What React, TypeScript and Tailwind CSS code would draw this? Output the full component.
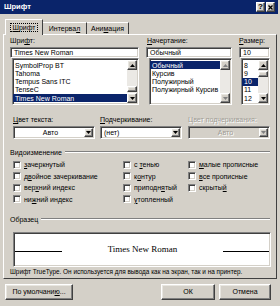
import React from 'react';

const raised =
  'border border-t-white border-l-white border-r-[#404040] border-b-[#404040] shadow-[inset_-1px_-1px_#808080,inset_1px_1px_#e8e6e0]';
const sunken =
  'border border-t-[#808080] border-l-[#808080] border-r-white border-b-white shadow-[inset_1px_1px_#404040,inset_-1px_-1px_#d4d0c8]';

function Arrow({ up, disabled }: { up?: boolean; disabled?: boolean }) {
  return (
    <svg width="5" height="3" viewBox="0 0 5 3">
      <polygon points={up ? '2.5,0 5,3 0,3' : '0,0 5,0 2.5,3'} fill={disabled ? '#808080' : '#000'} />
    </svg>
  );
}

function ScrollBtn({ up, disabled }: { up?: boolean; disabled?: boolean }) {
  return (
    <div className={`flex h-[10px] w-[10px] shrink-0 items-center justify-center bg-[#d4d0c8] ${raised}`}>
      <Arrow up={up} disabled={disabled} />
    </div>
  );
}

function Scrollbar({ thumbTop, disabled }: { thumbTop?: number; disabled?: boolean }) {
  return (
    <div className="flex h-full w-[10px] shrink-0 flex-col bg-[#ebe9e5]">
      <ScrollBtn up disabled={disabled} />
      <div className="relative flex-1">
        {thumbTop !== undefined && (
          <div className={`absolute left-0 h-[6px] w-[10px] bg-[#d4d0c8] ${raised}`} style={{ top: thumbTop }} />
        )}
      </div>
      <ScrollBtn disabled={disabled} />
    </div>
  );
}

function ListBox({
  items,
  selected,
  thumbTop,
  disabled,
  className,
}: {
  items: string[];
  selected: number;
  thumbTop?: number;
  disabled?: boolean;
  className: string;
}) {
  return (
    <div className={`flex h-[47px] bg-white ${sunken} ${className}`}>
      <div className="flex min-w-0 flex-1 flex-col pt-[2px]">
        {items.map((it, i) => (
          <div
            key={it}
            className={`flex h-[8.25px] items-center whitespace-nowrap pl-[2px] leading-none ${
              i === selected ? 'bg-[#0a246a] text-white' : 'text-black'
            }`}
          >
            {it}
          </div>
        ))}
      </div>
      <div className="py-[1px] pr-[1px]">
        <Scrollbar thumbTop={thumbTop} disabled={disabled} />
      </div>
    </div>
  );
}

function Combo({ text, center, disabled, className }: { text: string; center?: boolean; disabled?: boolean; className: string }) {
  return (
    <div className={`flex h-[13px] items-center ${disabled ? 'bg-[#d4d0c8]' : 'bg-white'} ${sunken} ${className}`}>
      <div
        className={`flex-1 pl-[3px] leading-none ${center ? 'text-center' : ''} ${
          disabled ? 'text-[#a09d96] [text-shadow:1px_1px_#ffffff]' : 'text-black'
        }`}
      >
        {text}
      </div>
      <div className={`mr-[1px] flex h-[9px] w-[9px] items-center justify-center bg-[#d4d0c8] ${raised}`}>
        <Arrow disabled={disabled} />
      </div>
    </div>
  );
}

function Mn({ text, i }: { text: string; i: number }) {
  return (
    <>
      {text.slice(0, i)}
      <span className="underline underline-offset-1">{text[i]}</span>
      {text.slice(i + 1)}
    </>
  );
}

function Check({ label, u }: { label: string; u?: number }) {
  return (
    <div className="flex h-[11.5px] items-center gap-[3px]">
      <div className={`h-[8px] w-[8px] shrink-0 bg-white ${sunken}`} />
      <span className="whitespace-nowrap leading-none">{u === undefined ? label : <Mn text={label} i={u} />}</span>
    </div>
  );
}

function Line({ label }: { label: string }) {
  return (
    <div className="flex h-[8px] items-center gap-[3px]">
      <span className="whitespace-nowrap leading-none">{label}</span>
      <div className="mr-[2px] h-[2px] flex-1 border-t border-b border-t-[#808080] border-b-white" />
    </div>
  );
}

export default function App() {
  return (
    <div
      className="flex h-[306px] w-[280px] flex-col overflow-hidden bg-[#d4d0c8] text-[7px] text-black"
      style={{ fontFamily: '"Liberation Sans", Arial, sans-serif' }}
    >
      {/* title bar */}
      <div className="mr-[2px] flex h-[14px] shrink-0 items-center justify-between bg-[#0a246a] pl-[4px] pr-[3px]">
        <span className="text-[7.5px] font-bold leading-none text-white">Шрифт</span>
        <div className="flex gap-[1px]">
          <div className={`flex h-[10px] w-[9px] items-center justify-center bg-[#d4d0c8] text-[8px] font-bold leading-none ${raised}`}>?</div>
          <div className={`flex h-[10px] w-[9px] items-center justify-center bg-[#d4d0c8] ${raised}`}>
            <svg width="5" height="5" viewBox="0 0 5 5">
              <path d="M0.5 0.5 L4.5 4.5 M4.5 0.5 L0.5 4.5" stroke="#000" strokeWidth="1.3" />
            </svg>
          </div>
        </div>
      </div>

      {/* tabs */}
      <div className="mt-[6px] flex h-[15px] items-end pl-[5px]">
        <div className="relative z-10 flex h-[16px] w-[38px] items-center justify-center border border-b-0 border-t-white border-l-white border-r-[#404040] bg-[#d4d0c8]">
          <span className="border border-dotted border-black px-[1px] leading-[7px]">
            <Mn text="Шрифт" i={0} />
          </span>
        </div>
        <div className="flex h-[13px] w-[44px] items-center justify-center border border-b-0 border-t-white border-l-0 border-r-[#404040]">
          <Mn text="Интервал" i={7} />
        </div>
        <div className="flex h-[13px] w-[42px] items-center justify-center border border-b-0 border-t-white border-l-0 border-r-[#404040]">
          <Mn text="Анимация" i={3} />
        </div>
      </div>

      {/* tab panel */}
      <div className="mx-[3px] -mt-[1px] flex h-[245px] flex-col border border-t-white border-l-white border-r-[#404040] border-b-[#404040] pl-[6px] pr-[4px] pt-[2px]">
        <div className="flex gap-[7px] pr-[1px]">
          <div className="flex w-[129px] flex-col">
            <div className="h-[8px] leading-[8px]">
              Шри<span className="underline underline-offset-1">ф</span>т:
            </div>
            <div className={`mt-[2px] flex h-[11px] items-center bg-white pl-[3px] leading-none ${sunken}`}>Times New Roman</div>
            <ListBox
              className="ml-[2px]"
              items={['SymbolProp BT', 'Tahoma', 'Tempus Sans ITC', 'TenseC', 'Times New Roman']}
              selected={4}
              thumbTop={16}
            />
          </div>
          <div className="flex w-[86px] flex-col">
            <div className="h-[8px] pl-[1px] leading-[8px]">
              <Mn text="Начертание:" i={0} />
            </div>
            <div className={`mt-[2px] flex h-[11px] items-center bg-white pl-[3px] leading-none ${sunken}`}>Обычный</div>
            <ListBox
              className="ml-[3px]"
              items={['Обычный', 'Курсив', 'Полужирный', 'Полужирный Курсив']}
              selected={0}
              disabled
            />
          </div>
          <div className="flex w-[31px] flex-col">
            <div className="h-[8px] leading-[8px]">
              <Mn text="Размер:" i={0} />
            </div>
            <div className={`mt-[2px] flex h-[11px] items-center bg-white pl-[3px] leading-none ${sunken}`}>10</div>
            <ListBox className="ml-[2px]" items={['8', '9', '10', '11', '12']} selected={2} thumbTop={1} />
          </div>
        </div>

        {/* colour row */}
        <div className="mt-[11px] flex pl-[3px]">
          <div className="flex w-[82px] flex-col">
            <div className="h-[8px] leading-[8px]">
              <Mn text="Цвет текста:" i={0} />
            </div>
            <Combo className="mt-[2px]" text="Авто" center />
          </div>
          <div className="ml-[5px] flex w-[82px] flex-col">
            <div className="h-[8px] leading-[8px]">
              <Mn text="Подчеркивание:" i={0} />
            </div>
            <Combo className="mt-[2px]" text="(нет)" />
          </div>
          <div className="ml-[6px] flex w-[82px] flex-col">
            <div className="h-[8px] leading-[8px] text-[#a09d96] [text-shadow:1px_1px_#ffffff]">Цвет подчеркивания:</div>
            <Combo className="mt-[2px]" text="Авто" center disabled />
          </div>
        </div>

        {/* effects */}
        <div className="mt-[9px]">
          <Line label="Видоизменение" />
        </div>
        <div className="mt-[3px] flex pl-[3px]">
          <div className="flex w-[110px] flex-col">
            <Check label="зачеркнутый" u={0} />
            <Check label="двойное зачеркивание" u={1} />
            <Check label="верхний индекс" u={3} />
            <Check label="нижний индекс" u={2} />
          </div>
          <div className="flex w-[65px] flex-col">
            <Check label="с тенью" u={2} />
            <Check label="контур" u={1} />
            <Check label="приподнятый" u={7} />
            <Check label="утопленный" u={0} />
          </div>
          <div className="flex flex-col">
            <Check label="малые прописные" u={0} />
            <Check label="все прописные" u={0} />
            <Check label="скрытый" u={6} />
          </div>
        </div>

        {/* sample */}
        <div className="mt-[10px]">
          <Line label="Образец" />
        </div>
        <div className={`ml-[3px] mr-[1px] mt-[9px] flex h-[35px] items-center bg-white px-[1px] ${sunken}`}>
          <div className="mt-[4px] h-[1px] w-[47px] bg-black" />
          <div
            className="flex-1 text-center text-[9px] leading-none"
            style={{ fontFamily: '"Liberation Serif", "Times New Roman", serif' }}
          >
            Times New Roman
          </div>
          <div className="mt-[4px] h-[1px] w-[46px] bg-black" />
        </div>
        <div className="mt-[1px] h-[8px] whitespace-nowrap text-[6.4px] leading-[8px]">
          Шрифт TrueType. Он используется для вывода как на экран, так и на принтер.
        </div>
      </div>

      {/* buttons */}
      <div className="mt-[5px] flex pl-[5px] pr-[9px]">
        <div className={`flex h-[16px] w-[68px] items-center justify-center ${raised}`}>
          По умолчани<span className="underline underline-offset-1">ю</span>...
        </div>
        <div className="flex-1" />
        <div className={`flex h-[16px] w-[54px] items-center justify-center ${raised}`}>ОК</div>
        <div className={`ml-[4px] flex h-[16px] w-[52px] items-center justify-center ${raised}`}>Отмена</div>
      </div>
    </div>
  );
}
